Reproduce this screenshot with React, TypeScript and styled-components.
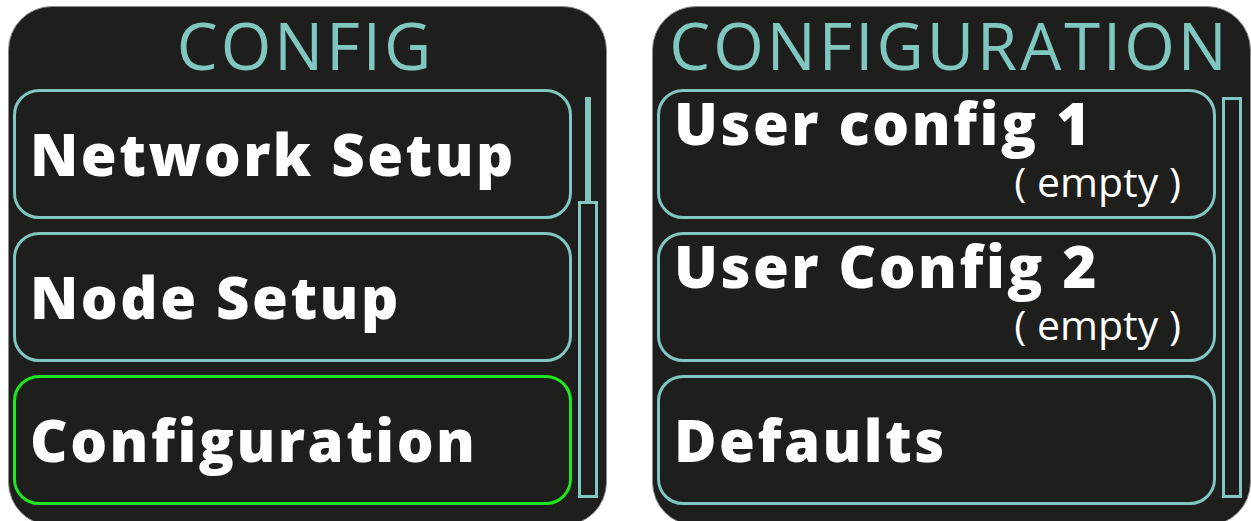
import styled, { createGlobalStyle } from 'styled-components';

const teal = '#80c7bf';
const green = '#1fe61f';

const GlobalStyle = createGlobalStyle`
  html, body {
    margin: 0;
    padding: 0;
    background: #ffffff;
    overflow: hidden;
  }
`;

const Screen = styled.div`
  display: flex;
  gap: 45px;
  padding: 6px 0 0 8px;
  width: 1251px;
  height: 521px;
  box-sizing: border-box;
  font-family: 'Open Sans', 'DejaVu Sans', sans-serif;
`;

const Panel = styled.section`
  box-sizing: border-box;
  width: 599px;
  height: 520px;
  display: grid;
  grid-template-rows: 82px 1fr;
  padding: 0 9px 0 4px;
  background: #1e1e1c;
  border: 1px solid #8c8c8c;
  border-radius: 44px;
`;

const Title = styled.h1`
  margin: 0;
  padding-top: 6px;
  font-weight: 400;
  font-size: 65px;
  line-height: 65px;
  letter-spacing: 3px;
  text-align: center;
  color: ${teal};
  white-space: nowrap;
`;

const Body = styled.div`
  display: flex;
  gap: 6px;
  align-items: stretch;
  height: 418px;
`;

const List = styled.div`
  display: flex;
  flex-direction: column;
  gap: 13px;
  width: 559px;
`;

const Item = styled.div<{ $selected?: boolean }>`
  box-sizing: border-box;
  height: 130px;
  display: flex;
  flex-direction: column;
  justify-content: center;
  padding: 0 30px 0 14px;
  border: 3px solid ${({ $selected }) => ($selected ? green : teal)};
  border-radius: 26px;
  color: #ffffff;
`;

const ItemTitle = styled.div`
  font-weight: 800;
  font-size: 58px;
  line-height: 58px;
  letter-spacing: 2.5px;
  white-space: nowrap;
`;

const SlotItem = styled(Item)`
  justify-content: flex-start;
  padding-top: 2px;
`;

const SlotNote = styled.div`
  margin-top: 9px;
  margin-right: 2px;
  align-self: flex-end;
  font-weight: 400;
  font-size: 41px;
  line-height: 41px;
  white-space: nowrap;
`;

const Scrollbar = styled.div`
  display: flex;
  flex-direction: column;
  align-items: center;
  width: 20px;
  margin: 8px 0 9px;
`;

const Track = styled.div<{ $height: number }>`
  width: 6px;
  height: ${({ $height }) => $height}px;
  background: ${teal};
`;

const Thumb = styled.div`
  box-sizing: border-box;
  flex: 1;
  width: 100%;
  border: 3px solid ${teal};
`;

const App = () => {
  return (
    <>
      <GlobalStyle />
      <Screen>
        <Panel>
          <Title>CONFIG</Title>
          <Body>
            <List>
              <Item>
                <ItemTitle>Network Setup</ItemTitle>
              </Item>
              <Item>
                <ItemTitle>Node Setup</ItemTitle>
              </Item>
              <Item $selected>
                <ItemTitle>Configuration</ItemTitle>
              </Item>
            </List>
            <Scrollbar>
              <Track $height={104} />
              <Thumb />
            </Scrollbar>
          </Body>
        </Panel>
        <Panel>
          <Title>CONFIGURATION</Title>
          <Body>
            <List>
              <SlotItem>
                <ItemTitle>User config 1</ItemTitle>
                <SlotNote>( empty )</SlotNote>
              </SlotItem>
              <SlotItem>
                <ItemTitle>User Config 2</ItemTitle>
                <SlotNote>( empty )</SlotNote>
              </SlotItem>
              <Item>
                <ItemTitle>Defaults</ItemTitle>
              </Item>
            </List>
            <Scrollbar>
              <Track $height={0} />
              <Thumb />
            </Scrollbar>
          </Body>
        </Panel>
      </Screen>
    </>
  );
};

export default App;
